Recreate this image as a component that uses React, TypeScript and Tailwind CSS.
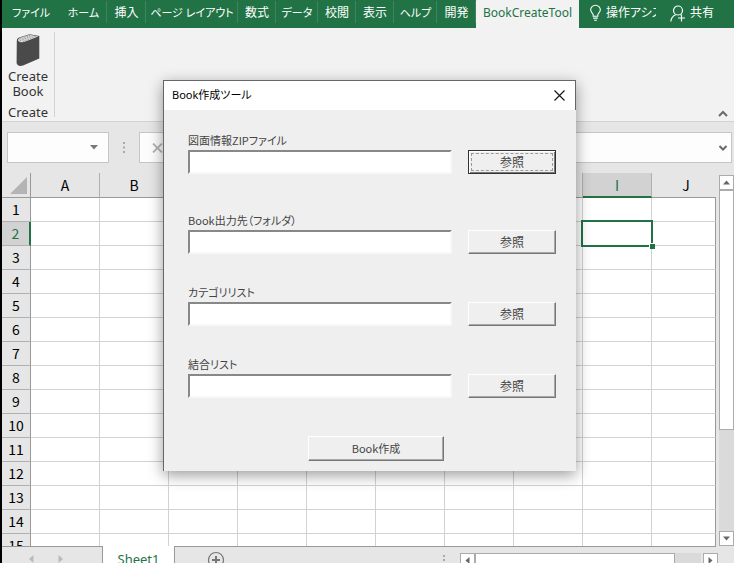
import React from "react";

const CJK = "font-['Noto_Sans','Noto_Sans_CJK_JP',sans-serif] [font-feature-settings:'palt']";
const GOTHIC = "font-['Noto_Sans_CJK_JP',sans-serif] [font-feature-settings:'palt']";

const TABS = [
  { label: "ファイル", style: "w-[58px] text-[11px]", line: false },
  { label: "ホーム", style: "w-[47px] text-[11px]", line: true },
  { label: "挿入", style: "w-[39px] text-xs", line: true },
  { label: "ページ レイアウト", style: "w-[92px] text-[11px]", line: true },
  { label: "数式", style: "w-[38px] text-xs", line: true },
  { label: "データ", style: "w-[42px] text-[11px]", line: true },
  { label: "校閲", style: "w-[38px] text-xs", line: true },
  { label: "表示", style: "w-[38px] text-xs", line: true },
  { label: "ヘルプ", style: "w-[43px] text-[11px]", line: true },
  { label: "開発", style: "w-[39px] text-xs", line: true },
];

const COLUMNS = ["A", "B", "C", "D", "E", "F", "G", "H", "I", "J"];
const ROWS = Array.from({ length: 15 }, (_, i) => i + 1);

const FIELDS = [
  { id: "zip", label: "図面情報ZIPファイル", gap: "mb-[38px]", focused: true },
  { id: "out", label: "Book出力先（フォルダ）", gap: "mb-[30px]", focused: false },
  { id: "category", label: "カテゴリリスト", gap: "mb-[30px]", focused: false },
  { id: "join", label: "結合リスト", gap: "mb-[38px]", focused: false },
];

function RibbonTabs() {
  return (
    <div className={`flex h-7 shrink-0 overflow-hidden bg-[#217346] text-xs text-white ${CJK}`}>
      <div role="tablist" className="flex">
        {TABS.map((t) => (
          <React.Fragment key={t.label}>
            <button
              role="tab"
              aria-selected={false}
              className={`flex shrink-0 items-center justify-center whitespace-nowrap pb-0.5 ${t.style}`}
            >
              {t.label}
            </button>
            {t.line && <span className="-ml-px mt-px h-[22px] w-px bg-[#3b8560]" />}
          </React.Fragment>
        ))}
        <button
          role="tab"
          aria-selected={true}
          className="flex w-[103px] items-center justify-center bg-[#f2f2f2] pb-0.5 text-[#217346]"
        >
          BookCreateTool
        </button>
      </div>
      <button className="flex items-center gap-1 pb-0.5 pl-2.5">
        <svg width="13" height="18" viewBox="0 0 14 18" fill="none" stroke="white" strokeWidth="1.2">
          <path d="M4.5 12.5V11C4.5 9.5 1.8 8.5 1.8 5.6a5.2 5 0 0 1 10.4 0C12.2 8.5 9.5 9.5 9.5 11v1.5z" />
          <path d="M4.5 14.5h5M5.500 16.8h3" />
        </svg>
        <span className="w-[50px] overflow-hidden whitespace-nowrap text-left">操作アシス</span>
      </button>
      <button className="flex items-center gap-1 whitespace-nowrap pb-0.5 pl-3.5">
        <svg width="16" height="17" viewBox="0 0 16 17" fill="none" stroke="white" strokeWidth="1.2">
          <circle cx="8" cy="5.5" r="4.500" />
          <path d="M.8 16.500c.3-3.500 2-5.500 4.800-6.800M10.500 9.500l1 .8M11.500 9.500v7M8 13h7" />
        </svg>
        <span>共有</span>
      </button>
    </div>
  );
}

function BookIcon() {
  return (
    <svg width="24" height="34" viewBox="0 0 24 34">
      <path d="M.8 8C.8 5.800 2 5 4 4.300L13.500 1.200 23.300 3v22.500L7 32.600C3.500 33.800.6 32.300.6 29.800z" fill="#4a4a4a" />
      <path d="M2 7.500C2 6 3 5.300 5 4.600L13.500 1.800 22.300 3.400 9.500 8.600C6 9.800 3 9.300 2 7.500z" fill="#dcdcdc" />
      <path d="M4 7.800 16.500 2.800M7 8.500l12.800-5.200M3.500 6.200 14 2.400" stroke="#8a8a8a" strokeWidth=".8" strokeDasharray="1.500 1" />
    </svg>
  );
}

function Ribbon() {
  return (
    <div className="flex h-[94px] shrink-0 border-b border-[#d2d2d2] bg-[#f2f2f2] pt-1">
      <div className="flex h-[85px] w-[53px] flex-col items-center border-r border-[#d2d2d2] font-['Noto_Sans',sans-serif] text-[13px] leading-[15px] text-[#333]">
        <button className="flex flex-col items-center pt-px">
          <BookIcon />
          <span className="pt-0.5">Create</span>
          <span>Book</span>
        </button>
        <span className="pt-1.5">Create</span>
      </div>
      <button aria-label="リボンを折りたたむ" className="mb-1 ml-auto mr-1.5 self-end">
        <svg width="10" height="7" viewBox="0 0 10 7" fill="none" stroke="#6a6a6a" strokeWidth="2">
          <path d="M1 6l4-4 4 4" />
        </svg>
      </button>
    </div>
  );
}

function FormulaBar() {
  return (
    <div className="flex h-[51px] shrink-0 items-start bg-[#e6e6e6] pl-[5px] pr-0.5 pt-[10px]">
      <div className="flex h-[31px] w-[102px] items-center border border-[#c6c6c6] bg-[#fdfdfd] pr-2.5">
        <input aria-label="名前ボックス" className="min-w-0 flex-1 bg-transparent outline-none" />
        <button aria-label="名前の一覧">
          <svg width="8" height="5" viewBox="0 0 8 5">
            <path d="M0 0h8L4 4.500z" fill="#777" />
          </svg>
        </button>
      </div>
      <svg className="mx-3.5 mt-[10px]" width="2" height="11" viewBox="0 0 2 11" fill="#a8a8a8">
        <path d="M0 0h2v2H0zM0 4.500h2v2H0zM0 9h2v2H0z" />
      </svg>
      <div className="flex h-[31px] flex-1 items-center border border-[#c6c6c6] bg-[#fdfdfd] pl-3 pr-1">
        <svg width="11" height="10" viewBox="0 0 11 10" stroke="#b4b4b4" strokeWidth="1.800">
          <path d="M1 .5l9 9M10 .5l-9 9" />
        </svg>
        <input aria-label="数式バー" className="min-w-0 flex-1 bg-transparent outline-none" />
        <button aria-label="数式バーの展開">
          <svg width="8" height="6" viewBox="0 0 8 6" fill="none" stroke="#6a6a6a" strokeWidth="2">
            <path d="M.5 1 4 4.500 7.500 1" />
          </svg>
        </button>
      </div>
    </div>
  );
}

function cellBorder(c: string) {
  return c === "J" ? "border-r-[#999]" : "border-r-[#d2d2d2]";
}

function Grid() {
  return (
    <div className="min-w-0 flex-1 overflow-hidden">
      <table className={`w-full table-fixed border-separate border-spacing-0 text-sm leading-5 text-black ${GOTHIC}`}>
        <colgroup>
          <col className="w-[29px]" />
          {COLUMNS.map((c) => (
            <col key={c} className={c === "J" ? "" : "w-[69px]"} />
          ))}
        </colgroup>
        <thead>
          <tr className="h-[25px]">
            <td className="border-b border-r border-[#999] p-0 pr-[3px]">
              <svg className="ml-auto" width="17" height="17" viewBox="0 0 17 17">
                <path d="M17 0v17H0z" fill="#b4b4b4" />
              </svg>
            </td>
            {COLUMNS.map((c) => (
              <th
                key={c}
                scope="col"
                className={`p-0 font-normal ${
                  c === "I"
                    ? "border-b-2 border-r border-b-[#217346] border-r-[#b0b0b0] bg-[#d2d2d2] text-[#217346]"
                    : c === "J"
                      ? "border-b border-b-[#999] pl-1"
                      : "border-b border-r border-b-[#999] border-r-[#b0b0b0]"
                }`}
              >
                {c}
              </th>
            ))}
          </tr>
        </thead>
        <tbody>
          {ROWS.map((r) => (
            <tr key={r} className="h-6">
              <th
                scope="row"
                className={`border-b border-r border-b-[#b0b0b0] p-0 pb-0.5 font-normal ${
                  r === 2 ? "border-r-2 border-r-[#217346] bg-[#d2d2d2] text-[#217346]" : "border-r-[#999]"
                }`}
              >
                {r}
              </th>
              {COLUMNS.map((c) => (
                <td key={c} className={`relative border-b border-r border-b-[#d2d2d2] bg-white p-0 ${cellBorder(c)}`}>
                  {c === "I" && r === 2 && (
                    <span className="absolute -inset-x-0.5 -inset-y-0.5 z-10 border-2 border-[#217346]">
                      <span className="absolute -bottom-1 -right-1 size-1.5 border-l border-t border-white bg-[#217346]" />
                    </span>
                  )}
                </td>
              ))}
            </tr>
          ))}
        </tbody>
      </table>
    </div>
  );
}

function ArrowButton({ label, path }: { label: string; path: string }) {
  return (
    <button
      aria-label={label}
      className="flex size-[15px] shrink-0 items-center justify-center border border-[#ababab] bg-white"
    >
      <svg width="7" height="7" viewBox="0 0 7 7" fill="#666">
        <path d={path} />
      </svg>
    </button>
  );
}

function SheetBar() {
  return (
    <div className="flex h-[17px] shrink-0 overflow-hidden bg-[#e6e6e6]">
      <div className="flex w-[101px] items-start justify-center gap-6 border-r border-t border-[#999] pr-3 pt-2">
        <button aria-label="前のシート">
          <svg width="5" height="8" viewBox="0 0 5 8">
            <path d="M4.500 0v8L0 4z" fill="#bbb" />
          </svg>
        </button>
        <button aria-label="次のシート">
          <svg width="5" height="8" viewBox="0 0 5 8">
            <path d="M.5 0v8L5 4z" fill="#bbb" />
          </svg>
        </button>
      </div>
      <button className={`flex w-[71px] items-start justify-center bg-white pt-[3px] text-[13px] leading-5 text-[#217346] ${CJK}`}>
        Sheet1
      </button>
      <div className="flex flex-1 flex-col border-l border-[#999]">
        <div className="mr-[18px] h-px shrink-0 bg-[#999]" />
        <div className="flex items-start pr-4 pt-1.5">
          <button aria-label="新しいシート" className="-mt-0.5 ml-8">
            <svg width="18" height="18" viewBox="0 0 18 18" fill="none" stroke="#777">
              <circle cx="9" cy="9" r="7.500" strokeWidth="1.200" />
              <path d="M9 5v8M5 9h8" strokeWidth="2" />
            </svg>
          </button>
          <svg className="ml-auto mr-[15px] mt-0.5" width="2" height="6" viewBox="0 0 2 6" fill="#a8a8a8">
            <path d="M0 0h2v2H0zM0 4h2v2H0z" />
          </svg>
          <div className="flex w-[258px] bg-[#dadada]">
            <ArrowButton label="左へスクロール" path="M5.500 0v7L1.500 3.500z" />
            <div className="h-[15px] w-[200px] border border-[#ababab] bg-white" />
            <div className="ml-auto flex border-l-2 border-[#e6e6e6]">
              <ArrowButton label="右へスクロール" path="M1.500 0v7l4-3.500z" />
            </div>
          </div>
        </div>
      </div>
    </div>
  );
}

function BookDialog() {
  const raised =
    "border border-b-[#777] border-l-white border-r-[#777] border-t-white shadow-[inset_-1px_-1px_0_#a8a8a8]";
  return (
    <div
      role="dialog"
      aria-labelledby="dialog-title"
      className={`absolute left-[161px] top-20 z-20 w-[413px] border-l border-t border-[#666] bg-[#efefef] text-xs shadow-[0_4px_14px_rgba(0,0,0,0.4)] ${GOTHIC}`}
    >
      <div className="flex h-[29px] items-center justify-between border-r border-[#666] bg-white pl-2 pr-2.5">
        <h1 id="dialog-title" className={`text-[11px] text-black ${CJK}`}>
          Book作成ツール
        </h1>
        <button aria-label="閉じる">
          <svg width="11" height="11" viewBox="0 0 11 11" stroke="#111" strokeWidth="1.100">
            <path d="M.5 .5l10 10M10.500 .5l-10 10" />
          </svg>
        </button>
      </div>
      <form className="flex flex-col pb-2.5 pl-6 pr-5 pt-[22px] text-[#444]" onSubmit={(e) => e.preventDefault()}>
        {FIELDS.map((f) => (
          <div key={f.id} className={f.gap}>
            <label htmlFor={f.id} className="block h-[18px] text-[11px] leading-4">
              {f.label}
            </label>
            <div className="flex gap-4">
              <input
                id={f.id}
                className="h-6 w-[264px] border-2 border-b-[#f8f8f8] border-l-[#888] border-r-[#f8f8f8] border-t-[#888] bg-white px-1 outline-none"
              />
              {f.focused ? (
                <button
                  type="button"
                  className="h-6 w-[88px] border border-[#333] p-0.5 shadow-[inset_1px_1px_0_#fff,inset_-1px_-1px_0_#777]"
                >
                  <span className="flex h-full items-center justify-center border border-dashed border-[#999]">参照</span>
                </button>
              ) : (
                <button type="button" className={`flex h-6 w-[88px] items-center justify-center ${raised}`}>
                  参照
                </button>
              )}
            </div>
          </div>
        ))}
        <button
          type="submit"
          className={`ml-[120px] flex h-[25px] w-[136px] items-center justify-center text-[11px] ${raised}`}
        >
          Book作成
        </button>
      </form>
    </div>
  );
}

export default function App() {
  return (
    <div className="relative flex h-screen flex-col overflow-hidden border-l-2 border-black bg-[#e6e6e6]">
      <RibbonTabs />
      <Ribbon />
      <FormulaBar />
      <div className="flex min-h-0 flex-1">
        <Grid />
        <div className="flex w-[18px] shrink-0 flex-col pl-[3px] pt-0.5">
          <ArrowButton label="上へスクロール" path="M0 5.500h7L3.500 1.500z" />
          <div className="flex flex-1 flex-col bg-[#dadada]">
            <div className="h-[240px] w-[15px] border border-[#ababab] bg-white" />
          </div>
          <ArrowButton label="下へスクロール" path="M0 1.500h7L3.500 5.500z" />
        </div>
      </div>
      <SheetBar />
      <BookDialog />
    </div>
  );
}
